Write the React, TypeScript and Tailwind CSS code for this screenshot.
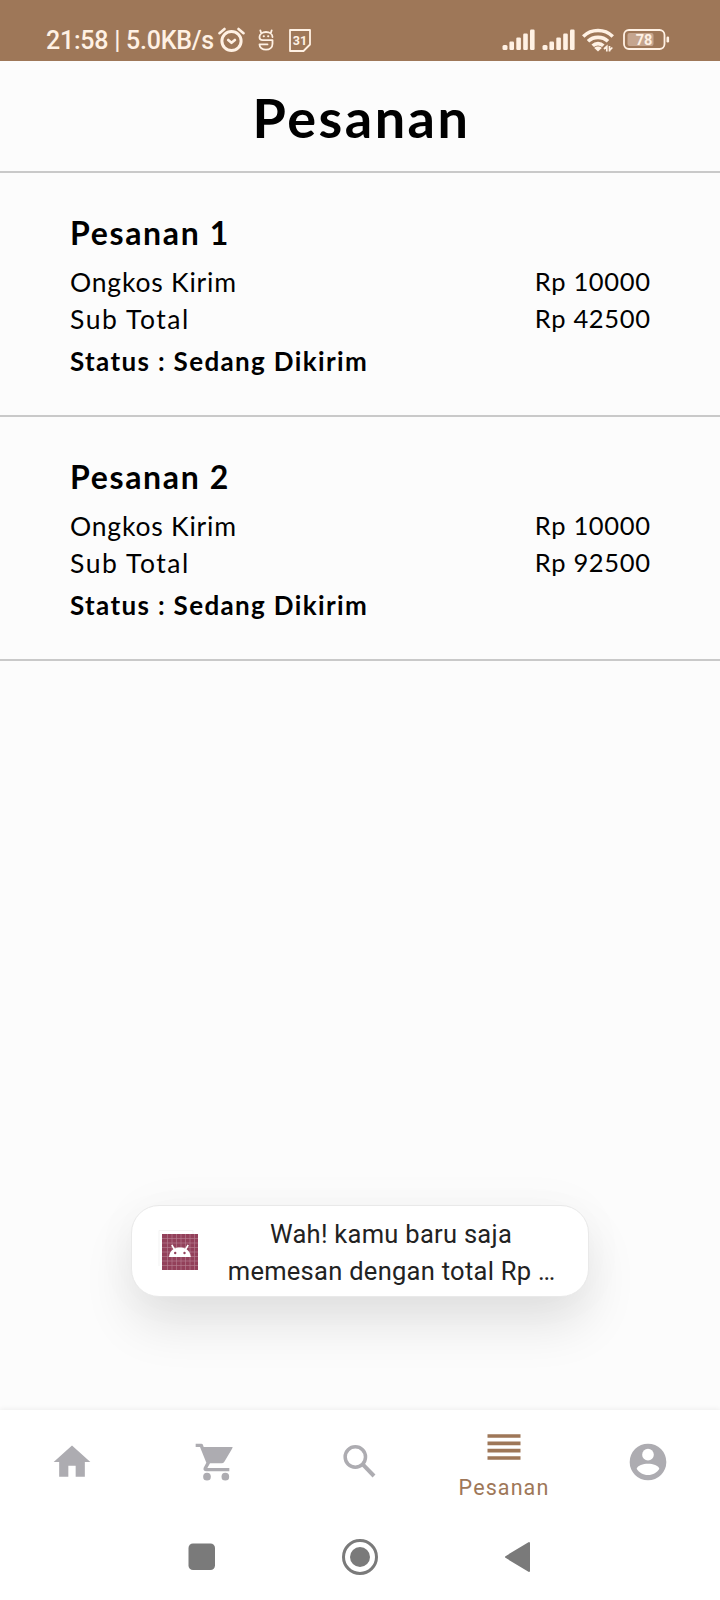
import { MdHome, MdReorder } from "react-icons/md";

const orders = [
  { id: 1, shipping: 10000, subtotal: 42500 },
  { id: 2, shipping: 10000, subtotal: 92500 },
];

function AlarmIcon() {
  return (
    <svg width="27" height="26" viewBox="0 0 27 26" fill="none" stroke="#fff1e4" strokeWidth="2.6" strokeLinecap="round" strokeLinejoin="round">
      <circle cx="13.5" cy="14" r="9.6" strokeWidth="3" />
      <path d="M10.2 13l3.300 2.800 3.400-2.800M1.500 6.200L6.500 2M25.500 6.200L20.500 2" />
    </svg>
  );
}

function AppIcon() {
  return (
    <svg width="16" height="22" viewBox="0 0 16 22" fill="none" stroke="#fff1e4" strokeWidth="1.8" strokeLinecap="round" strokeLinejoin="round">
      <path d="M14.500 8C14.500 5 11.600 3 8 3S1.500 5 1.500 8v.3c0 2 1.200 2.900 3.200 2.900h9.800v3.500c0 3.600-2.800 6-6.500 6s-6.500-2.200-6.500-5.300h8M3 3.600L2.300 1.300M13 3.600l.7-2.300" />
      <path d="M5.700 7.200h.2M10.100 7.200h.2" strokeWidth="2" />
    </svg>
  );
}

function CalendarIcon() {
  return (
    <svg width="22" height="23" viewBox="0 0 22 23" fill="none">
      <path d="M1 1h20v14.500L14.500 22H1z" stroke="#fff1e4" strokeWidth="1.800" strokeLinejoin="round" />
      <text x="11" y="15.800" textAnchor="middle" fontFamily="Roboto, sans-serif" fontSize="12.500" fontWeight="700" fill="#fff1e4">31</text>
    </svg>
  );
}

function SignalIcon() {
  return (
    <svg width="33" height="22" viewBox="0 0 33 22" fill="#fff1e4">
      <rect x="0.500" y="16" width="5" height="5" rx="1.500" />
      <rect x="7.400" y="12.500" width="4.600" height="8.500" rx="1.200" />
      <rect x="14.300" y="8.500" width="4.600" height="12.500" rx="1.200" />
      <rect x="21.200" y="4.500" width="4.600" height="16.500" rx="1.200" />
      <rect x="28" y="0.500" width="4.600" height="20.500" rx="1.200" />
    </svg>
  );
}

function WifiIcon() {
  return (
    <svg width="32" height="24" viewBox="0 0 32 24" fill="none" stroke="#fff1e4" strokeWidth="3.600">
      <path d="M1.200 8.500C9.500.500 22.500.500 30.800 8.500M6 13.300c5.600-5.200 14.400-5.200 20 0M10.700 17.800c3-2.900 7.600-2.900 10.600 0" />
      <path d="M12.200 20c2.200-1.900 5.400-1.900 7.600 0L16 23.500z" fill="#fff1e4" stroke="none" />
      <path d="M22 21l2.800-2.500v5M27.500 23.500V18M27.500 22.500l2.800-3" strokeWidth="1.700" />
    </svg>
  );
}

function BatteryIcon() {
  return (
    <svg width="47" height="22" viewBox="0 0 47 22" fill="none">
      <rect x="1" y="1" width="40.500" height="19" rx="5" stroke="#fff1e4" strokeWidth="1.800" />
      <rect x="4.500" y="4" width="26" height="13" rx="2" fill="#c5a58e" />
      <rect x="43.500" y="7.500" width="2.600" height="6" rx="1.200" fill="#fff1e4" />
      <text x="21" y="15.800" textAnchor="middle" fontFamily="Roboto, sans-serif" fontSize="14.500" fontWeight="700" fill="#fff1e4">78</text>
    </svg>
  );
}

function DroidIcon() {
  return (
    <svg width="40" height="42" viewBox="0 0 40 42" fill="none">
      <path d="M1 37V1.500h34V5" stroke="#f3f3f3" />
      <rect x="4" y="5" width="36" height="36" fill="#93405a" />
      <path d="M9.500 5v36M14 5v36M18.500 5v36M23 5v36M27.500 5v36M32 5v36M36.500 5v36M4 9.500h36M4 14h36M4 18.500h36M4 23h36M4 27.500h36M4 32h36M4 36.500h36" stroke="#b98294" strokeWidth="0.600" />
      <path d="M11 28c.4-4 2-6.500 5-8.200 3.500-1.900 8.300-1.900 11.800 0 2.900 1.700 4.600 4.200 5 8.200z" fill="#fff" />
      <path d="M16.500 20.500L13.800 16M27.500 20.500l2.700-4.500" stroke="#fff" strokeWidth="1.600" />
      <circle cx="17.200" cy="24" r="1.200" fill="#93405a" />
      <circle cx="26.500" cy="24" r="1.200" fill="#93405a" />
    </svg>
  );
}

function CartIcon() {
  return (
    <svg width="44" height="44" viewBox="27 24 132 132" fill="currentColor">
      <path d="M32 35h17q4 0 5 4l2 6h87q-1 4-4 9l-21 35q-3 5-8 5H75l-8 14h66v10H64q-11-1-8-11l8-15L45 45H32z" />
      <circle cx="66" cy="134" r="11.500" />
      <circle cx="121" cy="134" r="11.500" />
    </svg>
  );
}

function SearchIcon() {
  return (
    <svg width="44" height="44" viewBox="9 24 132 132" fill="none" stroke="currentColor">
      <circle cx="61" cy="75" r="30.500" strokeWidth="10.500" />
      <path d="M84 98l33 34" strokeWidth="12" />
    </svg>
  );
}

function AccountIcon() {
  return (
    <svg width="44" height="44" viewBox="588 120 132 132">
      <circle cx="654" cy="186" r="55" fill="currentColor" />
      <circle cx="654" cy="164" r="17.500" fill="#fff" />
      <path d="M620 206c3-10 19-15 34-15s31 5 34 15c-6 11-19 19-34 19s-28-8-34-19z" fill="#fff" />
    </svg>
  );
}

function Order({ id, shipping, subtotal }: { id: number; shipping: number; subtotal: number }) {
  return (
    <section className="h-[244px] border-b-2 border-[#c9c9c9] px-[70px] pt-[40px] font-[Lato,sans-serif] text-black">
      <h2 className="h-[51px] text-[32px] leading-[40px] font-bold tracking-[1.65px]">Pesanan {id}</h2>
      <div className="flex h-[37px] justify-between text-[26.500px] leading-[36px]">
        <span className="tracking-[0.800px]">Ongkos Kirim</span>
        <span className="-mt-px -mr-[0.600px] text-[25.500px] tracking-[0.650px]">Rp {shipping}</span>
      </div>
      <div className="flex h-[41px] justify-between text-[26.500px] leading-[36px]">
        <span className="tracking-[1.550px]">Sub Total</span>
        <span className="-mt-px -mr-[0.600px] text-[25.500px] tracking-[0.650px]">Rp {subtotal}</span>
      </div>
      <p className="text-[26px] leading-[38px] font-bold tracking-[1.350px]">Status : Sedang Dikirim</p>
    </section>
  );
}

export default function App() {
  return (
    <div className="flex h-[1600px] w-[720px] flex-col overflow-hidden bg-[#fcfcfc] font-[Roboto,sans-serif]">
      <header className="flex h-[61px] shrink-0 items-start bg-[#9e7758] pt-[28px] pl-[46px] text-[#fff1e4]">
        <span className="w-[172px] pt-px text-[25px] leading-[24px] font-medium tracking-[-0.250px] whitespace-nowrap">21:58 | 5.0KB/s</span>
        <div className="flex h-6 w-[284px] items-center">
          <AlarmIcon />
          <div className="ml-[13px]"><AppIcon /></div>
          <div className="ml-[15px]"><CalendarIcon /></div>
        </div>
        <div className="flex h-6 items-center">
          <SignalIcon />
          <div className="ml-[7px]"><SignalIcon /></div>
          <div className="ml-[7px]"><WifiIcon /></div>
          <div className="ml-[9px]"><BatteryIcon /></div>
        </div>
      </header>

      <div className="h-[112px] shrink-0 border-b-2 border-[#c9c9c9] pt-[24px] pl-[3px] text-center font-[Lato,sans-serif] text-[54px] leading-[66px] font-bold tracking-[2.500px] text-black">
        <h1>Pesanan</h1>
      </div>

      <main className="relative flex-1">
        {orders.map((o) => (
          <Order key={o.id} {...o} />
        ))}
        <div className="absolute bottom-[113px] left-[131px] flex h-[92px] w-[458px] items-center rounded-[28px] border border-[#e9e9e9] bg-white pl-[26px] shadow-[0_28px_50px_rgba(0,0,0,0.10),0_0_50px_rgba(0,0,0,0.03)]">
          <div className="mb-[3px]"><DroidIcon /></div>
          <p className="mt-[4px] ml-[18px] w-[350px] text-center text-[25.500px] leading-[37px] tracking-[0.280px] text-[#222]">
            Wah! kamu baru saja
            <br />
            memesan dengan total Rp <span className="tracking-[-1.300px]">...</span>
          </p>
        </div>
      </main>

      <nav className="grid h-[100px] shrink-0 grid-cols-5 bg-white text-[#adacb1] shadow-[0_-1px_5px_rgba(0,0,0,0.06)]">
        <div className="flex justify-center pt-[30px]"><MdHome size={44} /></div>
        <div className="flex justify-center pt-[30px]"><CartIcon /></div>
        <div className="flex justify-center pt-[30px]"><SearchIcon /></div>
        <div className="flex flex-col items-center pt-[15px] text-[#9e7758]">
          <MdReorder size={44} />
          <span className="mt-[5px] text-[21.500px] leading-[28px] tracking-[1.100px]">Pesanan</span>
        </div>
        <div className="flex justify-center pt-[30px]"><AccountIcon /></div>
      </nav>

      <footer className="flex h-[90px] shrink-0 items-center justify-center gap-[122px] bg-white pt-[3px] text-[#7a7a7a]">
        <svg width="36" height="36" viewBox="0 0 36 36" fill="currentColor"><rect x="4.500" y="4.500" width="26.500" height="26.500" rx="4.500" /></svg>
        <svg width="36" height="36" viewBox="0 0 36 36" fill="currentColor"><circle cx="18" cy="18" r="16.500" fill="none" stroke="currentColor" strokeWidth="3" /><circle cx="18" cy="18" r="10" /></svg>
        <svg width="36" height="36" viewBox="0 0 36 36" fill="currentColor" stroke="currentColor" strokeWidth="2" strokeLinejoin="round"><path d="M6 18L29 4v28z" /></svg>
      </footer>
    </div>
  );
}
